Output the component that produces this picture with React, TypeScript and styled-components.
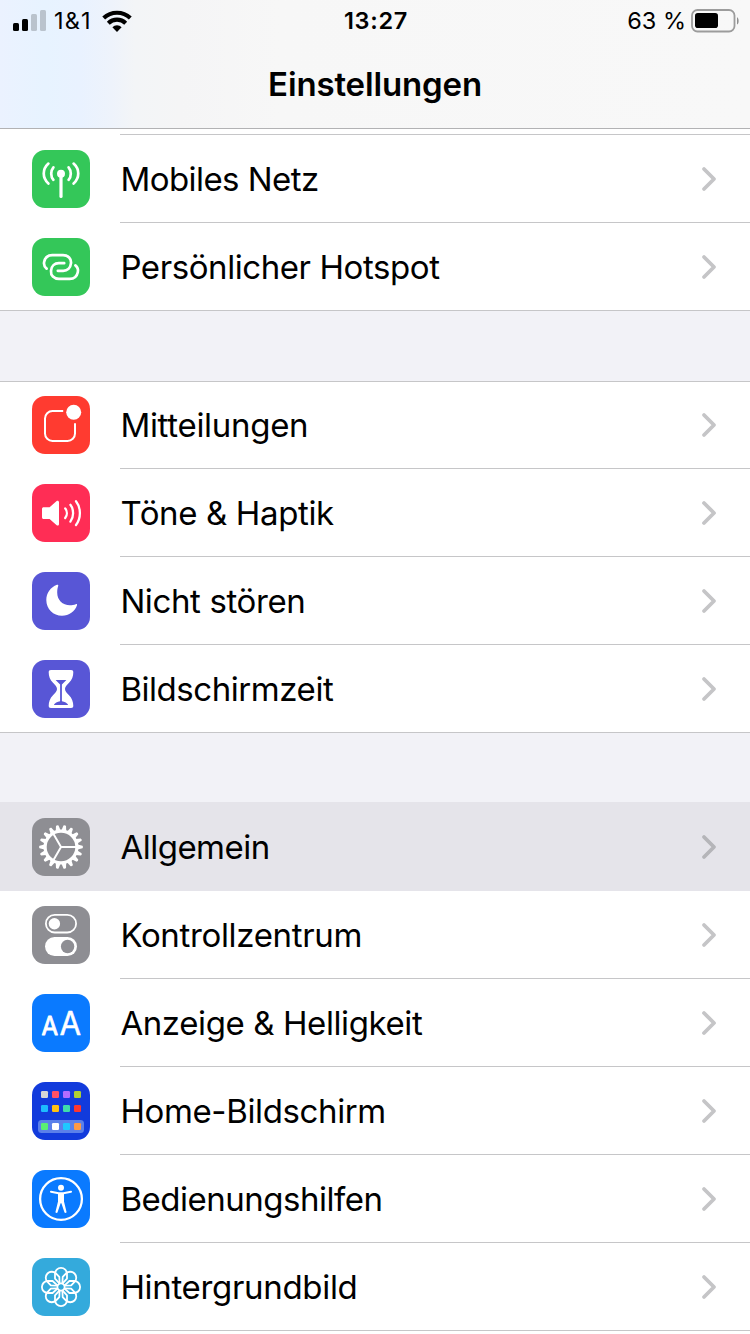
import React from "react";
import styled, { createGlobalStyle } from "styled-components";

const GlobalStyle = createGlobalStyle`
  * { box-sizing: border-box; }
  body {
    margin: 0;
    background: #f2f2f7;
    font-family: Inter, "Liberation Sans", sans-serif;
    color: #000;
  }
`;

const Screen = styled.main`
  width: 750px;
  height: 1334px;
  overflow: hidden;
  display: flex;
  flex-direction: column;
`;

const Header = styled.header`
  flex: none;
  height: 129px;
  border-bottom: 1px solid #b2b2b4;
  background: linear-gradient(90deg, #ebf2ff 0, #e7f3ff 45px, #e9f2ff 80px, #eef3fb 112px, #f3f5f7 135px, #f5f5f6 180px, #f7f7f7 280px, #f8f8f8 100%);
`;

const StatusBar = styled.div`
  height: 40px;
  padding: 0 11px 0 13px;
  display: grid;
  grid-template-columns: 1fr auto 1fr;
  align-items: center;
  font-size: 23.5px;
  line-height: 42px;
`;

const StatusSide = styled.div<{ $end?: boolean }>`
  display: flex;
  align-items: center;
  height: 40px;
  justify-content: ${(p) => (p.$end ? "flex-end" : "flex-start")};
`;

const Signal = styled.div`
  display: flex;
  align-items: flex-end;
  gap: 3px;
  height: 21px;
  margin: 0 8px 1px 0;
`;

const SignalBar = styled.i<{ $h: number; $on?: boolean }>`
  width: 6px;
  height: ${(p) => p.$h}px;
  border-radius: 1.5px;
  background: ${(p) => (p.$on ? "#000" : "#bac3cd")};
`;

const Carrier = styled.span`
  letter-spacing: 1.2px;
  margin-right: 10px;
`;

const Clock = styled.time`
  font-weight: 600;
  letter-spacing: 0.7px;
`;

const Percent = styled.span`
  margin-right: 5px;
`;

const Title = styled.h1`
  margin: 0;
  height: 88px;
  line-height: 88px;
  text-align: center;
  font-size: 33px;
  font-weight: 600;
  letter-spacing: -0.15px;
`;

const Group = styled.section<{ $gap?: number; $line?: boolean }>`
  flex: none;
  margin-top: ${(p) => p.$gap ?? 0}px;
  background: #fff;
  box-shadow: ${(p) => (p.$line ? "inset 0 1px 0 #c6c6c8" : "none")};
`;

const PreviousRowEdge = styled.div`
  height: 6px;
  margin-left: 120px;
  border-bottom: 1px solid #c6c6c8;
`;

const Row = styled.div<{ $selected?: boolean; $last?: boolean }>`
  height: ${(p) => (p.$selected ? 89 : 88)}px;
  padding: ${(p) => (p.$selected ? 1 : 0)}px 0 0 32px;
  display: flex;
  background: ${(p) => (p.$selected ? "#e5e4ea" : "transparent")};
  border-bottom: ${(p) => (p.$last ? "1px solid #c6c6c8" : "none")};
`;

const Tile = styled.div<{ $bg: string }>`
  flex: none;
  width: 58px;
  height: 58px;
  margin-top: 15px;
  margin-right: 30px;
  border-radius: 13px;
  overflow: hidden;
  background: ${(p) => p.$bg};
`;

const RowBody = styled.div<{ $line: boolean; $selected?: boolean }>`
  flex: 1;
  height: 88px;
  padding: 0 32px 0 0;
  display: flex;
  align-items: center;
  justify-content: space-between;
  border-bottom: 1px solid ${(p) => (p.$line ? "#c6c6c8" : "transparent")};
  color: ${(p) => (p.$selected ? "#b5b5b9" : "#c5c5c7")};
`;

const Label = styled.span<{ $tracking: number }>`
  padding-left: 0.4px;
  color: #000;
  font-size: 33px;
  line-height: 44px;
  white-space: nowrap;
  letter-spacing: ${(p) => p.$tracking}px;
`;

const TailSpace = styled.div`
  height: 3px;
  background: #fff;
`;

const Svg = styled.svg`
  display: block;
  flex: none;
`;

const Glyph = ({ children }: { children: React.ReactNode }) => (
  <Svg width="58" height="58" viewBox="0 0 58 58" fill="none" stroke="#fff" strokeLinecap="round" strokeLinejoin="round">
    {children}
  </Svg>
);

const Chevron = () => (
  <Svg width="18" height="28" viewBox="0 0 18 28" fill="none" stroke="currentColor" strokeWidth="3.8" strokeLinecap="round" strokeLinejoin="round">
    <path d="M4 4 14 14 4 24" />
  </Svg>
);

const Wifi = () => (
  <Svg width="30" height="22" viewBox="0 0 30 22" fill="none" stroke="#000" strokeWidth="4.1">
    <path d="M1.7 8.1A19.2 19.2 0 0 1 28.3 8.1" />
    <path d="M6.3 13.2A12.4 12.4 0 0 1 23.7 13.2" />
    <path d="M15 22 10.4 17.3A6.4 6.4 0 0 1 19.6 17.3Z" fill="#000" stroke="none" />
  </Svg>
);

const Battery = () => (
  <Svg width="48" height="24" viewBox="0 0 48 24">
    <rect x="1" y="1" width="42.5" height="21.5" rx="5.5" fill="none" stroke="#9c9c9c" strokeWidth="1.8" />
    <rect x="4" y="4" width="23" height="15" rx="2.8" />
    <path d="M46 8.3C48.2 9.4 48.2 14.4 46 15.5Z" fill="#8f8f8f" />
  </Svg>
);

const Antenna = () => (
  <Glyph>
    <g strokeWidth="2.7">
      <circle cx="29" cy="23.7" r="4" fill="#fff" stroke="none" />
      <path d="M29 25V46.4" strokeWidth="3.2" />
      <path d="M21.4 17.4C18.5 21 18.5 26.3 21.4 29.8M36.6 17.4C39.5 21 39.5 26.3 36.6 29.8" />
      <path d="M16.4 13.6C10.2 19.2 10.2 28 16.4 33.6M41.6 13.6C47.8 19.2 47.8 28 41.6 33.6" />
    </g>
  </Glyph>
);

const linkHalf = "M14.6 30.6C12.2 28.7 11.6 26.4 12.2 23.8C13.1 19.6 16.3 17.2 20.3 17.2H31C36.2 17.2 39.4 20.6 39 25.2C38.6 29.8 35.4 32.8 31.2 32.8H25.8";

const Hotspot = () => (
  <Glyph>
    <g strokeWidth="2.7">
      <path d={linkHalf} />
      <path d={linkHalf} transform="rotate(180 29 29)" />
    </g>
  </Glyph>
);

const Notifications = () => (
  <Glyph>
    <path d="M31.2 15H20.5A7.5 7.5 0 0 0 13 22.5V37.5A7.5 7.5 0 0 0 20.5 45H35.5A7.5 7.5 0 0 0 43 37.5V27.2" strokeWidth="2" strokeLinecap="butt" />
    <circle cx="41.7" cy="16.3" r="7.5" fill="#fff" stroke="none" />
  </Glyph>
);

const Speaker = () => (
  <Glyph>
    <path d="M11.8 23.3H17.6L24.4 17.2C25.6 16.2 27 16.8 27 18.4V39.9C27 41.5 25.6 42 24.4 41L17.6 35H11.8C10.6 35 10 34.4 10 33.2V25.1C10 23.9 10.6 23.3 11.8 23.3Z" fill="#fff" stroke="none" />
    <g strokeWidth="2.3">
      <path d="M33.2 24.4C35.4 27.2 35.4 31.2 33.2 34" />
      <path d="M38.4 20.8C42 25.4 42 33 38.4 37.6" />
      <path d="M44 17.2C49.2 23.8 49.2 34.4 44 41" />
    </g>
  </Glyph>
);

const Moon = () => (
  <Glyph>
    <path d="M25 12.8C18.5 15.2 14.3 21.2 14.3 28C14.3 37 21.3 43.8 30 43.8C37 43.8 43 39.5 45 33.3C45.3 32.3 44.6 31.8 43.8 32.2C42 33 40 33.3 38 33.3C30.5 33.3 25.2 28 25.2 20.5C25.2 18 25.5 16 26.2 14C26.5 13 25.9 12.5 25 12.8Z" fill="#fff" stroke="none" />
  </Glyph>
);

const Hourglass = () => (
  <Glyph>
    <path d="M19 10H39C40.6 10 41.3 10.8 41.3 12.2C41.3 16.2 40 19.8 37 22.8C34.6 25.2 33 26.8 33 29C33 31.2 34.6 32.8 37 35.2C40 38.2 41.3 41.8 41.3 45.8C41.3 47.2 40.6 48 39 48H19C17.4 48 16.7 47.2 16.7 45.8C16.7 41.8 18 38.2 21 35.2C23.4 32.8 25 31.2 25 29C25 26.8 23.4 25.2 21 22.8C18 19.8 16.7 16.2 16.7 12.2C16.7 10.8 17.4 10 19 10Z" fill="#fff" stroke="none" />
    <path d="M23.6 20H34.4L29.9 24.4V41.3C32.5 42 35.5 43 36.2 45H21.8C22.5 43 25.5 42 28.1 41.3V24.4Z" fill="#5856d6" stroke="none" />
  </Glyph>
);

const Gear = () => (
  <Glyph>
    <circle cx="29" cy="29" r="15.9" strokeWidth="3.2" />
    {Array.from({ length: 18 }, (_, i) => (
      <path key={i} d="M45.5 26.6 50.5 27.7Q51.5 29 50.5 30.3L45.5 31.4Z" fill="#fff" stroke="none" transform={`rotate(${i * 20} 29 29)`} />
    ))}
    <path d="M29 29H44M29 29 21.5 16M29 29 21.5 42" strokeWidth="2" />
  </Glyph>
);

const Toggles = () => (
  <Glyph>
    <rect x="13.9" y="8.9" width="30.2" height="17.6" rx="8.8" strokeWidth="1.8" />
    <circle cx="22.4" cy="17.7" r="5.7" fill="#fff" stroke="none" />
    <rect x="13" y="31" width="32" height="19" rx="9.5" fill="#fff" stroke="none" />
    <circle cx="35.6" cy="40.5" r="6.7" fill="#8e8e93" stroke="none" />
  </Glyph>
);

const TextSize = () => (
  <Glyph>
    <g fill="#fff" strokeWidth="0.8" fontFamily="Inter, sans-serif">
      <text x="9.6" y="40.6" fontSize="25" textLength="16.6" lengthAdjust="spacingAndGlyphs">A</text>
      <text x="27.4" y="40.6" fontSize="32.5" strokeWidth="0.5" textLength="21.6" lengthAdjust="spacingAndGlyphs">A</text>
    </g>
  </Glyph>
);

const appRows = [
  { y: 9, colors: ["#d6d6d6", "#ff5166", "#b46cff", "#aed136"] },
  { y: 23, colors: ["#1cbcff", "#ffc110", "#3fdcab", "#ff3730"] },
  { y: 41, colors: ["#5af074", "#ffffff", "#1fc8ff", "#ff9a45"] },
];

const HomeScreen = () => (
  <Glyph>
    <rect x="6" y="38" width="46" height="13" rx="3.5" fill="#5b80ea" stroke="none" />
    {appRows.map((r) =>
      r.colors.map((c, i) => <rect key={c} x={9 + i * 11} y={r.y} width="7" height="7" rx="1.2" fill={c} stroke="none" />)
    )}
  </Glyph>
);

const Accessibility = () => (
  <Glyph>
    <circle cx="29" cy="29" r="20.9" strokeWidth="2.3" />
    <circle cx="29" cy="17.8" r="3" fill="#fff" stroke="none" />
    <path d="M19 21.8 26.6 23.2H31.4L39 21.8" strokeWidth="2.1" />
    <path d="M26 23H32V31.5L34.6 42.2Q33.6 43.6 32.5 42.6L29.4 33.2H28.6L25.5 42.6Q24.4 43.6 23.4 42.2L26 31.5Z" fill="#fff" stroke="none" />
  </Glyph>
);

const Flower = () => (
  <Glyph>
    <g strokeWidth="1.8">
      <circle cx="29" cy="29" r="3.6" />
      {Array.from({ length: 8 }, (_, i) => (
        <path key={i} d="M27.4 25.4 23 20.6V15.9A6 6 0 0 1 35 15.9V20.6L30.6 25.4" transform={`rotate(${i * 45} 29 29)`} />
      ))}
    </g>
  </Glyph>
);

interface Item {
  label: string;
  bg: string;
  icon: React.ReactNode;
  tracking: number;
  selected?: boolean;
}

const connectivity: Item[] = [
  { label: "Mobiles Netz", bg: "#34c759", icon: <Antenna />, tracking: -0.55 },
  { label: "Persönlicher Hotspot", bg: "#34c759", icon: <Hotspot />, tracking: -0.42 },
];

const attention: Item[] = [
  { label: "Mitteilungen", bg: "#ff3b30", icon: <Notifications />, tracking: -0.3 },
  { label: "Töne & Haptik", bg: "#ff2d55", icon: <Speaker />, tracking: -0.36 },
  { label: "Nicht stören", bg: "#5856d6", icon: <Moon />, tracking: -0.38 },
  { label: "Bildschirmzeit", bg: "#5856d6", icon: <Hourglass />, tracking: -0.45 },
];

const device: Item[] = [
  { label: "Allgemein", bg: "#8e8e93", icon: <Gear />, selected: true, tracking: -0.5 },
  { label: "Kontrollzentrum", bg: "#8e8e93", icon: <Toggles />, tracking: -0.34 },
  { label: "Anzeige & Helligkeit", bg: "#0a7aff", icon: <TextSize />, tracking: -0.4 },
  { label: "Home-Bildschirm", bg: "#123bdc", icon: <HomeScreen />, tracking: -0.37 },
  { label: "Bedienungshilfen", bg: "#0a7aff", icon: <Accessibility />, tracking: -0.48 },
  { label: "Hintergrundbild", bg: "#34aadc", icon: <Flower />, tracking: -0.32 },
];

const Rows = ({ items, closed }: { items: Item[]; closed?: boolean }) => (
  <>
    {items.map((item, i) => {
      const last = !!closed && i === items.length - 1;
      return (
        <Row key={item.label} $selected={item.selected} $last={last}>
          <Tile $bg={item.bg}>{item.icon}</Tile>
          <RowBody $line={!last && !item.selected} $selected={item.selected}>
            <Label $tracking={item.tracking}>{item.label}</Label>
            <Chevron />
          </RowBody>
        </Row>
      );
    })}
  </>
);

export default function App() {
  return (
    <Screen>
      <GlobalStyle />
      <Header>
        <StatusBar>
          <StatusSide>
            <Signal>
              <SignalBar $h={8} $on />
              <SignalBar $h={12} $on />
              <SignalBar $h={17} />
              <SignalBar $h={21} />
            </Signal>
            <Carrier>1&amp;1</Carrier>
            <Wifi />
          </StatusSide>
          <Clock>13:27</Clock>
          <StatusSide $end>
            <Percent>63 %</Percent>
            <Battery />
          </StatusSide>
        </StatusBar>
        <Title>Einstellungen</Title>
      </Header>
      <Group>
        <PreviousRowEdge />
        <Rows items={connectivity} closed />
      </Group>
      <Group $gap={70} $line>
        <Rows items={attention} closed />
      </Group>
      <Group $gap={69}>
        <Rows items={device} />
        <TailSpace />
      </Group>
    </Screen>
  );
}
